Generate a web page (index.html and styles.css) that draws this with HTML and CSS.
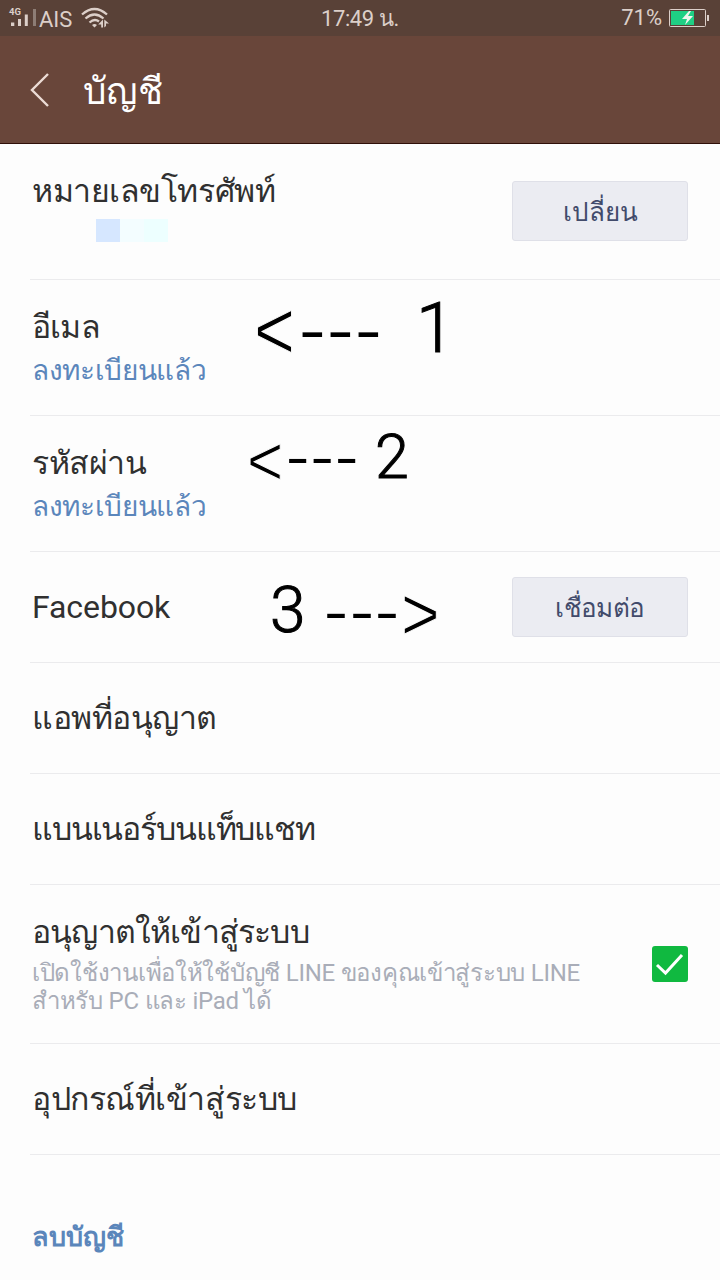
FILE: index.html
```
<!DOCTYPE html>
<html lang="th">
<head>
<meta charset="utf-8">
<title>บัญชี</title>
<link rel="stylesheet" href="styles.css">
</head>
<body>
<div class="status">
  <svg class="signal" width="28" height="20" viewBox="0 0 28 20">
    <text class="net" x="0" y="7">4G</text>
    <path fill="#dccfc9" d="M2 14.500h3.300v3.500H2zM9 11h3v7H9zM15.800 6.500h3V18h-3z"/>
    <path fill="#8d7d75" d="M24 1h3v17h-3z"/>
  </svg>
  <span class="carrier">AIS</span>
  <svg class="wifi" width="29" height="22" viewBox="0 0 29 22">
    <g fill="none" stroke="#dccfc9" stroke-width="2.300">
      <path d="M1 7.500Q13.500-3.500 26 7.500"/><path d="M4.500 11.500Q13.500 3.500 22.500 11.500"/><path d="M8.500 15.500Q13.500 11 18 14.500"/>
    </g>
    <path fill="#dccfc9" d="M11 18q2.500-1.800 5 0l-2.500 2.500zM22 12.500v8h-1.800V17.500h-3zM23.300 12.500v8l1.700-1.500v-2.500h3z"/>
  </svg>
  <span class="time">17:49 น.</span>
  <span class="percent">71%</span>
  <svg class="battery" width="40" height="18" viewBox="0 0 40 18">
    <rect x=".5" y=".5" width="36" height="17" rx="1" fill="none" stroke="#dccfc9"/>
    <path fill="#1fcf84" d="M2 2h23v14H2z"/>
    <path fill="#dccfc9" d="M38 6h2v6h-2z"/>
    <path fill="#f0f5ee" d="M20 2l-7 8h5l-2 6 8-9h-5l3-5z"/>
  </svg>
</div>
<header class="bar">
  <svg class="back" width="20" height="34" viewBox="0 0 20 34"><path d="M18 1L2 17l16 16" fill="none" stroke="#ecdcd5" stroke-width="2.400"/></svg>
  <h1 class="title">บัญชี</h1>
</header>
<main class="list">
  <section class="row phone">
    <div class="texts"><div class="label">หมายเลขโทรศัพท์</div><div class="mask"><i class="m1"></i><i class="m2"></i><i class="m3"></i></div></div>
    <button class="btn">เปลี่ยน</button>
  </section>
  <section class="row double">
    <div class="texts"><div class="label snug">อีเมล</div><div class="state">ลงทะเบียนแล้ว</div></div>
    <svg class="note" width="200" height="134" viewBox="250 280 200 134">
      <text class="angle" transform="translate(254 359) scale(1 1.200)" font-size="70">&lt;</text>
      <text class="dash" transform="translate(299 349.500) scale(1 .75)" x="0 28 56" font-size="80">---</text>
      <text class="digit" x="416" y="352" font-size="70">1</text>
    </svg>
  </section>
  <section class="row double">
    <div class="texts"><div class="label">รหัสผ่าน</div><div class="state">ลงทะเบียนแล้ว</div></div>
    <svg class="note" width="200" height="134" viewBox="250 416 200 134">
      <text class="angle" transform="translate(247 485) scale(1 1.150)" font-size="62">&lt;</text>
      <text class="dash" transform="translate(286 475) scale(1 .75)" x="0 24.500 49" font-size="70">---</text>
      <text class="digit" x="375" y="478" font-size="61">2</text>
    </svg>
  </section>
  <section class="row single">
    <div class="label latin">Facebook</div>
    <svg class="note" width="200" height="109" viewBox="250 552 200 109">
      <text class="digit" x="270" y="632" font-size="64">3</text>
      <text class="dash" transform="translate(324 630) scale(1 .75)" x="0 26 51" font-size="72">---</text>
      <text class="angle" transform="translate(401 639.500) scale(1 1.150)" font-size="66">&gt;</text>
    </svg>
    <button class="btn narrow">เชื่อมต่อ</button>
  </section>
  <section class="row single"><div class="label">แอพที่อนุญาต</div></section>
  <section class="row single"><div class="label tight">แบนเนอร์บนแท็บแชท</div></section>
  <section class="row login">
    <div class="texts"><div class="label snug">อนุญาตให้เข้าสู่ระบบ</div>
    <div class="desc">เปิดใช้งานเพื่อให้ใช้บัญชี LINE ของคุณเข้าสู่ระบบ LINE<br>สำหรับ PC และ iPad ได้</div></div>
    <svg class="check" width="36" height="36" viewBox="0 0 36 36"><rect width="36" height="36" rx="3" fill="#10b940"/><path d="M5 19l8.500 8L30 9" fill="none" stroke="#fff" stroke-width="3"/></svg>
  </section>
  <section class="row single"><div class="label">อุปกรณ์ที่เข้าสู่ระบบ</div></section>
  <div class="delete">ลบบัญชี</div>
</main>
</body>
</html>
```
FILE: styles.css
```
* { box-sizing: border-box; }
body { margin: 0; width: 720px; height: 1280px; overflow: hidden; background: #fdfdfd; font-family: Roboto, sans-serif; color: #303030; }
.status { height: 36px; background: #594137; display: flex; align-items: center; color: #dccfc9; font-size: 22px; padding: 0 11px 0 9px; position: relative; line-height: 36px; }
.signal { margin-top: -1px; overflow: visible; }
.net { font-size: 9.5px; font-weight: 700; fill: #dccfc9; }
.carrier { margin-left: 2px; padding-top: 3px; }
.wifi { margin-left: 9px; }
.time { position: absolute; left: 321px; top: 1px; letter-spacing: -.4px; }
.percent { margin-left: auto; }
.battery { margin-left: 7px; }
.bar { height: 108px; background: #69463a; border-bottom: 1px solid #2f1009; display: flex; align-items: center; padding: 0 0 0 30px; }
.title { margin: 4px 0 0 33px; font-size: 37px; font-weight: 400; line-height: 50px; color: #fff; }
.row { margin-left: 30px; padding: 0 32px 0 2px; border-bottom: 1px solid #ebebed; display: flex; align-items: flex-start; justify-content: space-between; position: relative; }
.phone { height: 136px; padding-top: 27px; }
.phone .btn { margin-top: 10px; padding-top: 2px; }
.double { height: 136px; padding-top: 27px; }
.single { height: 111px; align-items: center; }
.login { height: 159px; padding-top: 27px; }
.label { font-size: 32px; line-height: 40px; letter-spacing: -.45px; white-space: nowrap; }
.latin { letter-spacing: -.1px; }
.snug { letter-spacing: -.82px; }
.tight { letter-spacing: -1.15px; }
.state { font-size: 28px; line-height: 48px; color: #5b86bb; letter-spacing: -.35px; }
.mask { display: flex; margin: 8px 0 0 64px; height: 23px; }
.m1 { width: 24px; background: #d6e7ff; }
.m2 { width: 24px; background: #f3fdff; }
.m3 { width: 24px; background: #edffff; }
.btn { width: 176px; height: 60px; border: 1px solid #dfe0e8; border-radius: 3px; background: #ebecf2; color: #424b6b; font: 26px/40px Roboto, sans-serif; padding: 0; }
.narrow { letter-spacing: -.55px; padding-top: 2px; }
.desc { margin-top: 7px; font-size: 24px; line-height: 28px; color: #a9adb8; white-space: nowrap; letter-spacing: -.27px; }
.check { margin-top: 34px; }
.delete { margin: 62px 0 0 32px; font-size: 27px; line-height: 40px; font-weight: 700; color: #5b86bb; }
.note { position: absolute; left: 220px; top: 0; overflow: visible; }
.note text { fill: #000; }
.angle, .dash { font-family: "Liberation Sans", sans-serif; }
.note .angle { stroke: #fdfdfd; stroke-width: .9px; }
.digit { font-family: Roboto, sans-serif; font-weight: 300; stroke: #000; stroke-width: 1px; }
```
